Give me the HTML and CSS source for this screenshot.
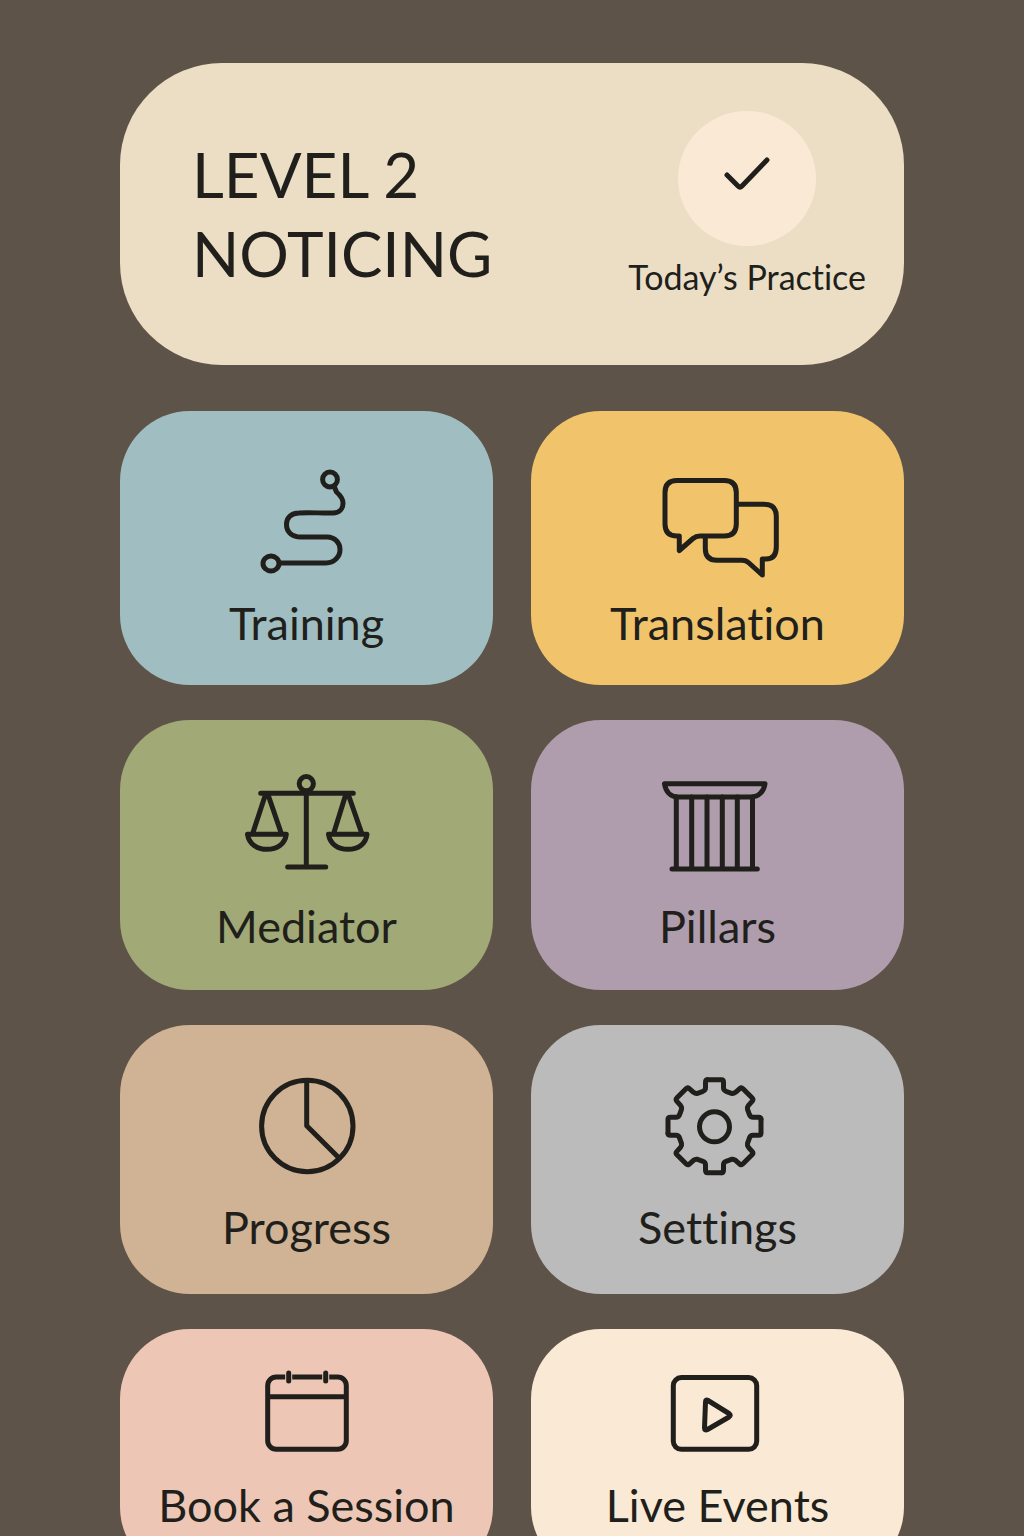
FILE: index.html
```html
<!DOCTYPE html>
<html lang="en">
<head>
  <meta charset="utf-8">
  <meta name="viewport" content="width=device-width, initial-scale=1">
  <title>Level 2 Noticing</title>
  <link rel="stylesheet" href="styles.css">
</head>
<body>
  <main class="screen">
    <header class="hero">
      <h1 class="hero-title">LEVEL 2<br>NOTICING</h1>
      <button class="practice" type="button">
        <span class="practice-badge">
          <svg class="check" viewBox="0 0 48 36" aria-hidden="true"><path d="M4 19 L15 30 Q17 32 19 30 L44 4"/></svg>
        </span>
        <span class="practice-label">Today’s Practice</span>
      </button>
    </header>

    <nav class="tiles" aria-label="Sections">
      <a class="tile tile-first training" href="#training">
        <svg class="icon" viewBox="0 0 127 116" aria-hidden="true">
          <circle cx="87" cy="12.5" r="7.4"/>
          <ellipse cx="28" cy="96.5" rx="8" ry="7.4"/>
          <path d="M91 19 L93.500 25 C98 29 100 32 100 36 C100 42 96 46 90 46 C78 46.500 68 45 56 46 C48 46 43.500 51 43.500 57.500 C43.500 65 49 70 58 70 H84 C92 70 97 76 97 82.500 C97 90 91 96 83 96 H37"/>
        </svg>
        <span>Training</span>
      </a>
      <a class="tile tile-first translation" href="#translation">
        <svg class="icon" viewBox="0 0 127 116" aria-hidden="true">
          <path d="M25.300 69 H23 Q11 69 11 57 V25.500 Q11 13.500 23 13.500 H70.300 Q82.300 13.500 82.300 25.500 V57 Q82.300 69 70.300 69 H46 Q42 69 39 71.500 L25.300 83.500 Z"/>
          <path d="M84 37.300 H110 Q122.300 37.300 122.300 49.300 V80 Q122.300 92 112 92 H108.300 V108 L95 96 Q92 93.300 88 93.300 H63 Q51.300 93.300 51.300 81.500 V70"/>
        </svg>
        <span>Translation</span>
      </a>
      <a class="tile mediator" href="#mediator">
        <svg class="icon" viewBox="0 0 127 116" aria-hidden="true">
          <circle cx="63.300" cy="13.700" r="7.100"/>
          <path d="M17.700 23.300 H110.300 M63.300 23.300 V97 M44.700 97 H82.700"/>
          <path d="M9.500 64 L22 26 M25.500 26 L38.500 64 M4.500 64.300 H43.300 C42 74 34 79.300 24 79.300 C14 79.300 6 74 4.500 64.300 Z"/>
          <path d="M90.500 64 L102.300 26 M105.800 26 L119 64 M85.500 64.300 H124 C123 74 115 79.300 105 79.300 C95 79.300 87 74 85.500 64.300 Z"/>
        </svg>
        <span>Mediator</span>
      </a>
      <a class="tile pillars" href="#pillars">
        <svg class="icon" viewBox="0 0 127 116" aria-hidden="true">
          <path d="M10.500 13.700 H111 C110 21 105 27 97 27 H24 C16 27 11.500 21 10.500 13.700 Z"/>
          <path d="M22.300 27 V99 M37.700 27 V99 M53 27 V99 M68.300 27 V99 M83.300 27 V99 M98.500 27 V99 M18 99 H103.300"/>
        </svg>
        <span>Pillars</span>
      </a>
      <a class="tile tile-third progress" href="#progress">
        <svg class="icon" viewBox="0 0 127 116" aria-hidden="true">
          <circle cx="64.300" cy="55" r="45.700"/>
          <path d="M63.700 10 V54.700 L96 87"/>
        </svg>
        <span>Progress</span>
      </a>
      <a class="tile tile-third settings" href="#settings">
        <svg class="icon" viewBox="0 0 127 116" aria-hidden="true">
          <defs>
            <path id="cog-quarter" d="M-7 -46.500 H7 Q9 -46.500 9 -44 V-38.500 Q9 -36 11.500 -35 L17 -33 Q19 -32.500 21 -34 L25.500 -38 Q27 -39 28.500 -37.500 L37.500 -28.500 Q39 -27 38 -25.500 L34 -21 Q32.500 -19 33 -17 L35 -11.500 Q36 -9 38.500 -9 H44 Q46.500 -9 46.500 -7"/>
          </defs>
          <g transform="translate(60.500 55.300)">
            <use href="#cog-quarter"/>
            <use href="#cog-quarter" transform="rotate(90)"/>
            <use href="#cog-quarter" transform="rotate(180)"/>
            <use href="#cog-quarter" transform="rotate(270)"/>
            <circle cx="0" cy="0.500" r="15"/>
          </g>
        </svg>
        <span>Settings</span>
      </a>
      <a class="tile tile-last booking" href="#booking">
        <svg class="icon" viewBox="0 0 127 116" aria-hidden="true">
          <rect x="24.700" y="28" width="78.600" height="72.300" rx="8.500"/>
          <path d="M27 47.700 H101"/>
          <path class="ring-gap" d="M45.700 25 V31 M82.700 25 V31"/>
          <path d="M45.700 24 V32 M82.700 24 V32"/>
        </svg>
        <span>Book a Session</span>
      </a>
      <a class="tile tile-last events" href="#events">
        <svg class="icon" viewBox="0 0 127 116" aria-hidden="true">
          <rect x="19.300" y="28.600" width="83.400" height="71.700" rx="8"/>
          <path d="M51.500 53 Q51.500 50 54 51.500 L75 64.500 Q77.500 66.300 75 68 L53.500 80.500 Q50.500 82 50.500 79 Z"/>
        </svg>
        <span>Live Events</span>
      </a>
    </nav>
  </main>
</body>
</html>
```

FILE: styles.css
```css
:root {
  --ink: #201f1b;
  --ground: #5e5349;
}

* {
  box-sizing: border-box;
}

body {
  margin: 0;
  background: var(--ground);
  color: var(--ink);
  font-family: Lato, "Open Sans", sans-serif;
  font-variant-ligatures: none;
}

/* The screen scrolls inside the window, without a visible bar. */
.screen {
  height: 100vh;
  overflow-y: auto;
  scrollbar-width: none;
  padding: 63px 120px;
}

.hero {
  display: flex;
  justify-content: space-between;
  align-items: center;
  min-height: 302px;
  margin-bottom: 46px;
  padding: 0 38px 0 72px;
  border-radius: 102px;
  background: #ecdec5;
}

.hero-title {
  margin: 0;
  font-size: 62px;
  line-height: 79px;
  font-weight: 400;
}

.practice {
  display: flex;
  flex-direction: column;
  align-items: center;
  gap: 10px;
  padding: 0 0 20px;
  border: 0;
  background: none;
  color: inherit;
  font: inherit;
  font-size: 34px;
  font-variant-ligatures: none;
  line-height: 42px;
  cursor: pointer;
}

.practice-badge {
  display: flex;
  align-items: center;
  justify-content: center;
  width: 138px;
  height: 135px;
  padding-bottom: 8px;
  border-radius: 50%;
  background: #faead5;
}

.check {
  width: 48px;
  height: 36px;
}

svg {
  fill: none;
  stroke: var(--ink);
  stroke-width: 5;
  stroke-linecap: round;
  stroke-linejoin: round;
}

.tiles {
  display: grid;
  grid-template-columns: 1fr 1fr;
  grid-template-rows: 274px 270px 269px 248px;
  gap: 35px 38px;
}

.tile {
  display: flex;
  flex-direction: column;
  align-items: center;
  gap: 12px;
  padding-top: 50px;
  border-radius: 70px;
  color: inherit;
  font-size: 45px;
  line-height: 56px;
  text-decoration: none;
}

.tile-first { padding-top: 56px; }
.tile-third { padding-top: 46px; }
.tile-last { padding-top: 20px; }

.icon {
  width: 127px;
  height: 116px;
}

.training { background: #a0bec1; }
.translation { background: #f1c46b; }
.mediator { background: #a1a976; }
.pillars { background: #af9cac; }
.progress { background: #d0b294; }
.settings { background: #bbbbbb; }
.booking { background: #edc6b5; }
.events { background: #faead5; }

.ring-gap {
  stroke: #edc6b5;
  stroke-width: 7;
}
```
